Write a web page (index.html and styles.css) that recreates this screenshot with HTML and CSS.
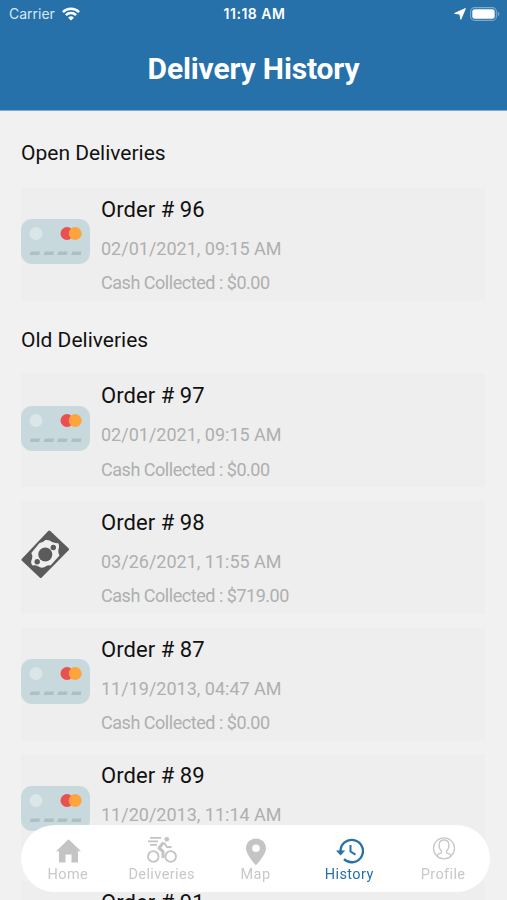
FILE: index.html
```html
<!DOCTYPE html>
<html lang="en">

<head>
    <meta charset="UTF-8">
    <meta name="viewport" content="width=device-width, initial-scale=1.0">
    <title>Delivery History</title>
    <link rel="stylesheet" href="styles.css">
</head>

<body>
    <!-- shared icons -->
    <svg class="icon-defs" width="0" height="0">
        <symbol id="icon-card" viewBox="0 0 69 45">
            <rect width="69" height="45" rx="11" fill="#c8d9dd" />
            <circle cx="15" cy="14.5" r="6.5" fill="#dae6e8" />
            <circle cx="46" cy="14.5" r="6.5" fill="#e9504f" />
            <circle cx="54.2" cy="14.5" r="6.5" fill="#ffa43d" />
            <path d="M10 32.5h9l-.8 3.6H8.6zM24 32.5h9l-.8 3.6H22.6zM37.5 32.5h9l-.8 3.6h-9.6zM51.5 32.5h9l-.8 3.6h-9.6z" fill="#adbec4" />
        </symbol>
        <symbol id="icon-cash" viewBox="0 0 49 49">
            <path d="M28.3 2L46.5 19.3 19.7 46.5 2 29.7z" fill="#5b5b5b" stroke="#5b5b5b" stroke-width="3" stroke-linejoin="round" />
            <path d="M18.5 13Q22 12.500 24.500 10Q28.500 9.500 31 12Q34.500 13.500 37 13Q39 15.500 37.300 20Q37 23 38.500 25.500L29.500 35.500Q26.500 34.500 23.700 37Q20 38.500 17.500 36.500Q14.500 34.500 11.500 35.500Q9 32.500 11 29Q12 25.500 10.300 23z" fill="#efefef" />
            <circle cx="24.3" cy="24.5" r="7" fill="#5b5b5b" />
            <circle cx="32.3" cy="17.500" r="2.7" fill="#5b5b5b" />
            <circle cx="16.200" cy="31.800" r="2.7" fill="#5b5b5b" />
        </symbol>
    </svg>

    <header class="header">
        <div class="status-bar">
            <div class="status-left">
                <span class="carrier">Carrier</span>
                <svg width="18" height="14" viewBox="0 0 18 14" fill="none" stroke="#fff" stroke-width="2.5">
                    <path d="M.9 5.2a11.5 11.5 0 0 1 16.2 0M3.9 8.2a7.2 7.2 0 0 1 10.2 0" />
                    <path d="M9 13.6L6.1 10.7a4.1 4.1 0 0 1 5.8 0z" fill="#fff" stroke="none" />
                </svg>
            </div>
            <span class="time">11:18 AM</span>
            <div class="status-right">
                <svg width="12" height="12" viewBox="0 0 12 12" fill="#fff">
                    <path d="M11.4.6L6.8 11.3 5.9 6.1.6 5.4z" stroke="#fff" stroke-width="1" stroke-linejoin="round" />
                </svg>
                <svg width="30" height="14" viewBox="0 0 30 14">
                    <rect x=".6" y=".6" width="25.8" height="12.8" rx="4" fill="none" stroke="#7dabcd" stroke-width="1.1" />
                    <rect x="2.3" y="2.2" width="22.4" height="9.6" rx="2.3" fill="#fff" />
                    <path d="M27.8 4.8q1.6.6 1.6 2.2t-1.6 2.2z" fill="#7dabcd" />
                </svg>
            </div>
        </div>
        <h1 class="page-title">Delivery History</h1>
    </header>

    <main class="content">
        <h2 class="section-title">Open Deliveries</h2>
        <div class="order-list">
            <div class="order">
                <div class="order-icon"><svg width="69" height="45"><use href="#icon-card" /></svg></div>
                <div class="order-info">
                    <h3>Order # 96</h3>
                    <p>02/01/2021, 09:15 AM</p>
                    <p class="cash">Cash Collected : $0.00</p>
                </div>
            </div>
        </div>

        <h2 class="section-title old">Old Deliveries</h2>
        <div class="order-list">
            <div class="order">
                <div class="order-icon"><svg width="69" height="45"><use href="#icon-card" /></svg></div>
                <div class="order-info">
                    <h3>Order # 97</h3>
                    <p>02/01/2021, 09:15 AM</p>
                    <p class="cash">Cash Collected : $0.00</p>
                </div>
            </div>
            <div class="order">
                <div class="order-icon"><svg width="49" height="49"><use href="#icon-cash" /></svg></div>
                <div class="order-info">
                    <h3>Order # 98</h3>
                    <p>03/26/2021, 11:55 AM</p>
                    <p class="cash">Cash Collected : $719.00</p>
                </div>
            </div>
            <div class="order">
                <div class="order-icon"><svg width="69" height="45"><use href="#icon-card" /></svg></div>
                <div class="order-info">
                    <h3>Order # 87</h3>
                    <p>11/19/2013, 04:47 AM</p>
                    <p class="cash">Cash Collected : $0.00</p>
                </div>
            </div>
            <div class="order">
                <div class="order-icon"><svg width="69" height="45"><use href="#icon-card" /></svg></div>
                <div class="order-info">
                    <h3>Order # 89</h3>
                    <p>11/20/2013, 11:14 AM</p>
                </div>
            </div>
            <div class="order">
                <div class="order-icon"></div>
                <div class="order-info">
                    <h3>Order # 91</h3>
                </div>
            </div>
        </div>
    </main>

    <nav class="tab-bar">
        <a class="tab">
            <svg width="30" height="30" viewBox="0 0 30 30" fill="#c4c4c4">
                <path d="M15.5 3.3L28 15.3h-3V26.5h-6.5v-8h-6v8H6V15.3H3z" />
            </svg>
            <span>Home</span>
        </a>
        <a class="tab">
            <svg width="30" height="30" viewBox="0 0 30 30" fill="none" stroke="#c4c4c4" stroke-width="1.8">
                <circle cx="6.3" cy="20.5" r="5.3" />
                <circle cx="23.7" cy="20.5" r="5.3" />
                <circle cx="19.8" cy="3.3" r="2.4" fill="#c4c4c4" stroke="none" />
                <path d="M3 1.8h11M1 5.3h10M3 8.8h7" />
                <path d="M16.5 6.5L12 12l4 3.5v6.5" stroke-width="3" stroke-linejoin="round" />
                <path d="M17 6.5l3 4.5h4.5" stroke-width="2" />
            </svg>
            <span>Deliveries</span>
        </a>
        <a class="tab">
            <svg width="30" height="30" viewBox="0 0 30 30" fill="#c4c4c4">
                <path fill-rule="evenodd" d="M16 2.5c-5.6 0-10 4.3-10 9.8C6 18.9 16 29.3 16 29.3s10-10.4 10-17c0-5.5-4.4-9.8-10-9.8zm0 6a3.8 3.8 0 1 1 0 7.6 3.8 3.8 0 0 1 0-7.6z" />
            </svg>
            <span>Map</span>
        </a>
        <a class="tab active">
            <svg width="30" height="30" viewBox="0 0 30 30" fill="none" stroke="#2671aa" stroke-width="2.3">
                <path d="M6.6 16A11.2 11.2 0 1 1 10 23.1" />
                <path d="M2 14.5h9.2L6.6 19.5z" fill="#2671aa" stroke="none" />
                <path d="M16.5 9v6.5l5 3.2" stroke-width="2" />
            </svg>
            <span>History</span>
        </a>
        <a class="tab">
            <svg width="30" height="30" viewBox="0 0 30 30" fill="none" stroke="#c8c8c8" stroke-width="1.3">
                <circle cx="16" cy="12.3" r="10.5" />
                <path d="M9 20q.5-2 3-2.6 2-.5 1.500-2.400c-2-2-2.700-4.300-2.400-6.500.3-2.700 2.300-4.500 4.900-4.500s4.600 1.800 4.900 4.500c.3 2.200-.4 4.500-2.400 6.500q-.5 1.900 1.500 2.400 2.500.6 3 2.600" />
            </svg>
            <span>Profile</span>
        </a>
    </nav>
</body>

</html>
```
FILE: styles.css
```css
* {
    box-sizing: border-box;
}

body {
    margin: 0;
    height: 900px;
    overflow: hidden;
    background-color: #f1f1f1;
    font-family: Roboto, "Liberation Sans", sans-serif;
    color: #111;
}

h1,
h2,
h3,
p {
    margin: 0;
    font-weight: 400;
    white-space: nowrap;
}

svg {
    display: block;
}

.icon-defs {
    position: absolute;
}

.header {
    height: 111px;
    background-color: #2671aa;
    border-bottom: 1px solid #7fabcc;
    color: white;
}

.status-bar {
    display: grid;
    grid-template-columns: 1fr auto 1fr;
    align-items: center;
    height: 27px;
    padding: 0 7px 0 9px;
    font-family: Inter, "Liberation Sans", sans-serif;
    font-size: 14px;
}

.status-left,
.status-right {
    display: flex;
    align-items: center;
    gap: 7px;
}

.status-right {
    justify-content: flex-end;
    gap: 4px;
}

.carrier {
    color: #d9e7f1;
}

.time {
    font-weight: 600;
    font-size: 14px;
    letter-spacing: 0.5px;
}

.page-title {
    font-size: 30px;
    font-weight: 700;
    line-height: 84px;
    letter-spacing: -0.15px;
    text-align: center;
}

.content {
    padding: 27px 22px 0 21px;
}

.section-title {
    font-size: 21px;
    line-height: 30px;
    margin-bottom: 19.5px;
}

.section-title.old {
    margin-top: 24px;
}

.order-list {
    display: flex;
    flex-direction: column;
    gap: 13.8px;
}

.order {
    display: flex;
    height: 113px;
    background-color: #eeeeee;
}

.order-icon {
    display: flex;
    align-items: center;
    width: 80px;
    height: 108px;
}

.order-info h3 {
    font-size: 22px;
    line-height: 44px;
    letter-spacing: 0.05px;
    color: #111;
}

.order-info p {
    font-size: 18px;
    line-height: 34.6px;
    color: #afafaf;
}

.order-info .cash {
    letter-spacing: -0.47px;
}

.tab-bar {
    position: fixed;
    left: 21px;
    top: 825px;
    width: 469px;
    height: 67px;
    display: flex;
    background-color: white;
    border-radius: 34px;
}

.tab {
    flex: 1;
    display: flex;
    flex-direction: column;
    align-items: center;
    padding-top: 11px;
    font-size: 14.5px;
    line-height: 18px;
    letter-spacing: 0.4px;
    color: #c8c8c8;
}

.tab.active {
    color: #2671aa;
}
```
